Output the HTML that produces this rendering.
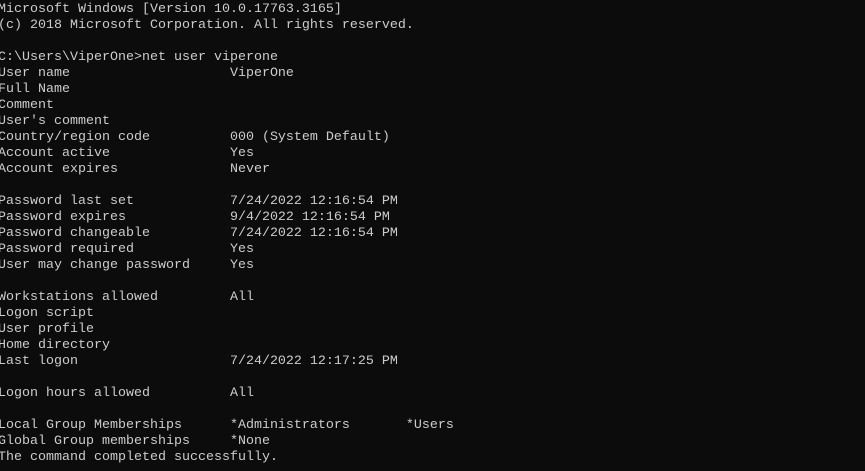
<!DOCTYPE html>
<html><head><style>
html,body{margin:0;padding:0;background:#0c0c0c;width:865px;height:471px;overflow:hidden}
pre{position:absolute;left:-2px;top:2px;margin:0;font-family:"Liberation Mono",monospace;font-size:13.33px;line-height:16px;color:#cccccc}
</style></head><body><pre>Microsoft Windows [Version 10.0.17763.3165]
(c) 2018 Microsoft Corporation. All rights reserved.

C:\Users\ViperOne>net user viperone
User name                    ViperOne
Full Name
Comment
User's comment
Country/region code          000 (System Default)
Account active               Yes
Account expires              Never

Password last set            7/24/2022 12:16:54 PM
Password expires             9/4/2022 12:16:54 PM
Password changeable          7/24/2022 12:16:54 PM
Password required            Yes
User may change password     Yes

Workstations allowed         All
Logon script
User profile
Home directory
Last logon                   7/24/2022 12:17:25 PM

Logon hours allowed          All

Local Group Memberships      *Administrators       *Users
Global Group memberships     *None
The command completed successfully.
</pre></body></html>
